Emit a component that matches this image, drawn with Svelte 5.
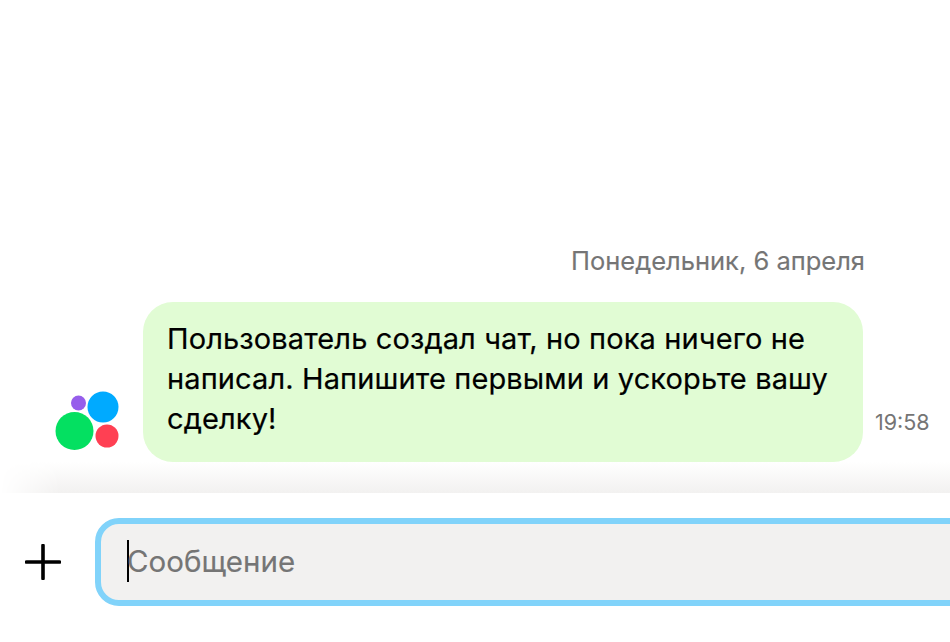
<script>
  const message = 'Пользователь создал чат, но пока ничего не написал. Напишите первыми и ускорьте вашу сделку!';
</script>

<div class="chat">
  <div class="history">
    <div class="date">Понедельник, 6 апреля</div>
    <div class="row">
      <svg class="avatar" width="64" height="60" viewBox="0 0 64 60" aria-hidden="true">
        <circle cx="19.5" cy="41" r="19" fill="#04e061" />
        <circle cx="48" cy="17" r="15.5" fill="#00aaff" />
        <circle cx="52" cy="46" r="11.5" fill="#ff4053" />
        <circle cx="23.5" cy="13" r="7.5" fill="#965eeb" />
      </svg>
      <div class="bubble">{message}</div>
      <span class="time">19:58</span>
    </div>
  </div>
  <div class="shade"></div>
  <div class="composer">
    <button class="add" aria-label="Добавить">
      <svg width="36" height="36" viewBox="0 0 36 36">
        <path d="M18 1.5v33M1.5 18h33" stroke="#000" stroke-width="3.6" stroke-linecap="round" fill="none" />
      </svg>
    </button>
    <div class="input">
      <i class="caret"></i>
      <span class="placeholder">Сообщение</span>
    </div>
  </div>
</div>

<style>
  :global(body) {
    background: #fff;
    overflow: hidden;
  }

  .chat {
    display: flex;
    flex-direction: column;
    width: 950px;
    height: 642px;
    overflow: hidden;
    font-family: Inter, "Liberation Sans", sans-serif;
  }

  .history {
    padding-top: 245px;
  }

  .date {
    padding-right: 85px;
    text-align: right;
    font-size: 25.5px;
    line-height: 32px;
    color: #757575;
    -webkit-text-stroke: 0.15px #757575;
  }

  .row {
    display: flex;
    align-items: flex-end;
    margin-top: 25px;
    padding-left: 55px;
  }

  .avatar {
    flex: none;
    width: 64px;
    height: 60px;
    margin-right: 24px;
    margin-bottom: 12px;
  }

  .bubble {
    box-sizing: border-box;
    width: 720px;
    height: 160px;
    padding: 17px 24px;
    border-radius: 30px;
    background: #e1fcd4;
    color: #000;
    font-size: 29px;
    line-height: 40px;
    letter-spacing: 0.12px;
    -webkit-text-stroke: 0.2px #000;
  }

  .time {
    margin-left: 12px;
    margin-bottom: 26px;
    font-size: 21.5px;
    line-height: 28px;
    color: #757575;
  }

  .shade {
    height: 31px;
    background: linear-gradient(#fff, #f2f1f0);
    -webkit-mask-image: linear-gradient(90deg, transparent 0, #000 60px);
    mask-image: linear-gradient(90deg, transparent 0, #000 60px);
  }

  .composer {
    display: flex;
    align-items: center;
    gap: 34px;
    margin-top: 25px;
    padding-left: 25px;
  }

  .add {
    flex: none;
    width: 36px;
    height: 36px;
    padding: 0;
    border: 0;
    background: none;
  }

  .add svg {
    display: block;
  }

  .input {
    flex: none;
    display: flex;
    align-items: center;
    box-sizing: border-box;
    width: 900px;
    height: 88px;
    padding: 0 0 3px 26px;
    border: 6px solid #81d3fa;
    border-radius: 24px;
    background: #f2f1f0;
  }

  .caret {
    flex: none;
    width: 2px;
    height: 42px;
    margin-right: -2px;
    background: #000;
  }

  .placeholder {
    font-size: 29.5px;
    line-height: 40px;
    color: #757575;
    -webkit-text-stroke: 0.15px #757575;
  }
</style>
